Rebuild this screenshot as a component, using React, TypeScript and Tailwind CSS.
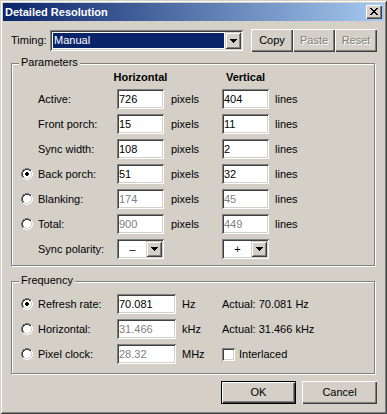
import React from "react";

const SUNKEN =
  "shadow-[inset_1px_1px_0_#808080,inset_-1px_-1px_0_#ffffff,inset_2px_2px_0_#404040,inset_-2px_-2px_0_#d4d0c8]";
const RAISED =
  "shadow-[inset_1px_1px_0_#ffffff,inset_-1px_-1px_0_#404040,inset_-2px_-2px_0_#808080]";
const RAISED_COMBO =
  "shadow-[inset_1px_1px_0_#d4d0c8,inset_-1px_-1px_0_#404040,inset_2px_2px_0_#ffffff,inset_-2px_-2px_0_#808080]";
const DEFAULT_BTN =
  "shadow-[inset_0_0_0_1px_#000000,inset_2px_2px_0_#ffffff,inset_-2px_-2px_0_#404040,inset_-3px_-3px_0_#808080]";

function Pixels({
  rows,
  colors,
}: {
  rows: string[];
  colors: Record<string, string>;
}) {
  const w = rows[0].length;
  const h = rows.length;
  const rects: React.ReactNode[] = [];
  rows.forEach((r, y) => {
    for (let x = 0; x < r.length; x++) {
      const c = colors[r[x]];
      if (c)
        rects.push(
          <rect key={`${x}-${y}`} x={x} y={y} width={1} height={1} fill={c} />
        );
    }
  });
  return (
    <svg
      width={w}
      height={h}
      viewBox={`0 0 ${w} ${h}`}
      shapeRendering="crispEdges"
      className="block"
    >
      {rects}
    </svg>
  );
}

const ARROW = ["XXXXXXX", ".XXXXX.", "..XXX..", "...X..."];
const CLOSE_X = [
  "XX....XX",
  ".XX..XX.",
  "..XXXX..",
  "...XX...",
  "..XXXX..",
  ".XX..XX.",
  "XX....XX",
];

const RADIO = [
  "....GGGG....",
  "..GGKKKKGG..",
  ".GKKwwwwKKW.",
  ".GKwwwwwwLW.",
  "GKwwwwwwwwLW",
  "GKwwwwwwwwLW",
  "GKwwwwwwwwLW",
  "GKwwwwwwwwLW",
  ".GKwwwwwwLW.",
  ".GLLwwwwLLW.",
  "..WWLLLLWW..",
  "....WWWW....",
];
const RADIO_ON = [
  "....GGGG....",
  "..GGKKKKGG..",
  ".GKKwwwwKKW.",
  ".GKwwwwwwLW.",
  "GKwwwXXwwwLW",
  "GKwwXXXXwwLW",
  "GKwwXXXXwwLW",
  "GKwwwXXwwwLW",
  ".GKwwwwwwLW.",
  ".GLLwwwwLLW.",
  "..WWLLLLWW..",
  "....WWWW....",
];
const RADIO_COLORS = {
  G: "#808080",
  K: "#404040",
  W: "#ffffff",
  L: "#d4d0c8",
  w: "#ffffff",
  X: "#000000",
};

function Radio({ checked }: { checked?: boolean }) {
  return <Pixels rows={checked ? RADIO_ON : RADIO} colors={RADIO_COLORS} />;
}

function Arrow() {
  return <Pixels rows={ARROW} colors={{ X: "#000000" }} />;
}

function Field({
  value,
  width,
  disabled,
}: {
  value: string;
  width: string;
  disabled?: boolean;
}) {
  return (
    <div
      className={`${width} h-[20px] bg-white ${SUNKEN} flex items-center pl-[2px] ${
        disabled ? "text-[#808080]" : "text-black"
      }`}
    >
      {value}
    </div>
  );
}

function Polarity({ sign }: { sign: string }) {
  return (
    <div className={`w-[47px] h-[20px] bg-white ${SUNKEN} p-[2px] flex`}>
      <div className="flex-1 flex items-center justify-center text-black">
        {sign}
      </div>
      <div
        className={`w-[16px] h-full bg-[#d4d0c8] ${RAISED_COMBO} flex items-center justify-center`}
      >
        <Arrow />
      </div>
    </div>
  );
}

function ParamRow({
  radio,
  checked,
  label,
  h,
  v,
  disabled,
}: {
  radio?: boolean;
  checked?: boolean;
  label: string;
  h: string;
  v: string;
  disabled?: boolean;
}) {
  return (
    <div className="flex items-center h-[20px]">
      <div className="w-[17px] flex items-center">
        {radio ? <Radio checked={checked} /> : null}
      </div>
      <div className="w-[79px]">{label}</div>
      <Field value={h} width="w-[47px]" disabled={disabled} />
      <div className="w-[51px] ml-[7px]">pixels</div>
      <Field value={v} width="w-[47px]" disabled={disabled} />
      <div className="ml-[6px]">lines</div>
    </div>
  );
}

function FreqRow({
  checked,
  label,
  value,
  unit,
  disabled,
  children,
}: {
  checked?: boolean;
  label: string;
  value: string;
  unit: string;
  disabled?: boolean;
  children?: React.ReactNode;
}) {
  return (
    <div className="flex items-center h-[20px]">
      <div className="w-[17px] flex items-center">
        <Radio checked={checked} />
      </div>
      <div className="w-[79px]">{label}</div>
      <Field value={value} width="w-[59px]" disabled={disabled} />
      <div className="w-[40px] ml-[6px]">{unit}</div>
      {children}
    </div>
  );
}

function Button({
  label,
  width,
  disabled,
  isDefault,
}: {
  label: string;
  width: string;
  disabled?: boolean;
  isDefault?: boolean;
}) {
  return (
    <div
      className={`${width} h-[23px] bg-[#d4d0c8] ${
        isDefault ? DEFAULT_BTN : RAISED
      } flex items-center justify-center ${
        disabled
          ? "text-[#808080] [text-shadow:1px_1px_0_#ffffff]"
          : "text-black"
      }`}
    >
      {label}
    </div>
  );
}

export default function App() {
  return (
    <div
      className={`w-[387px] h-[414px] bg-[#d4d0c8] p-[3px] flex flex-col font-['Liberation_Sans',Arial,sans-serif] text-[11px] leading-[13px] text-black shadow-[inset_1px_1px_0_#d4d0c8,inset_-1px_-1px_0_#404040,inset_2px_2px_0_#ffffff,inset_-2px_-2px_0_#808080] overflow-hidden select-none`}
    >
      {/* Title bar */}
      <div className="h-[18px] flex items-center justify-between pl-[2px] pr-[2px] bg-[linear-gradient(to_right,#0a246a,#a6caf0)]">
        <span className="text-white font-bold">Detailed Resolution</span>
        <div
          className={`w-[16px] h-[14px] bg-[#d4d0c8] ${RAISED} flex items-center justify-center pb-[1px]`}
        >
          <Pixels rows={CLOSE_X} colors={{ X: "#000000" }} />
        </div>
      </div>

      {/* Body */}
      <div className="flex flex-col pl-[8px] pr-[7px]">
        {/* Timing row */}
        <div className="mt-[8px] h-[23px] flex items-center">
          <div className="w-[39px]">Timing:</div>
          <div className={`w-[193px] h-[21px] bg-white ${SUNKEN} p-[2px] flex`}>
            <div className="flex-1 m-[1px] bg-[#0a246a] text-white flex items-center pl-[1px]">
              Manual
            </div>
            <div
              className={`w-[16px] h-full bg-[#d4d0c8] ${RAISED_COMBO} flex items-center justify-center`}
            >
              <Arrow />
            </div>
          </div>
          <div className="ml-[8px] flex">
            <Button label="Copy" width="w-[42px]" />
            <Button label="Paste" width="w-[42px]" disabled />
            <Button label="Reset" width="w-[42px]" disabled />
          </div>
        </div>

        {/* Parameters */}
        <div className="relative mt-[11px] mr-[2px] border border-[#808080] shadow-[1px_1px_0_#ffffff,inset_1px_1px_0_#ffffff] pt-[7px] pb-[6px] pl-[9px]">
          <span className="absolute left-[7px] top-[-8px] px-[2px] bg-[#d4d0c8]">
            Parameters
          </span>
          <div className="flex h-[13px] font-bold">
            <div className="w-[96px]" />
            <div className="w-[47px] flex justify-center whitespace-nowrap">
              Horizontal
            </div>
            <div className="w-[58px]" />
            <div className="w-[47px] flex justify-center whitespace-nowrap">
              Vertical
            </div>
          </div>
          <div className="mt-[5px] flex flex-col gap-[5px]">
            <ParamRow label="Active:" h="726" v="404" />
            <ParamRow label="Front porch:" h="15" v="11" />
            <ParamRow label="Sync width:" h="108" v="2" />
            <ParamRow radio checked label="Back porch:" h="51" v="32" />
            <ParamRow radio label="Blanking:" h="174" v="45" disabled />
            <ParamRow radio label="Total:" h="900" v="449" disabled />
            <div className="flex items-center h-[20px]">
              <div className="w-[17px]" />
              <div className="w-[79px]">Sync polarity:</div>
              <Polarity sign="–" />
              <div className="w-[51px] ml-[7px]" />
              <Polarity sign="+" />
            </div>
          </div>
        </div>

        {/* Frequency */}
        <div className="relative mt-[15px] mr-[2px] border border-[#808080] shadow-[1px_1px_0_#ffffff,inset_1px_1px_0_#ffffff] pt-[12px] pb-[9px] pl-[9px]">
          <span className="absolute left-[7px] top-[-8px] px-[2px] bg-[#d4d0c8]">
            Frequency
          </span>
          <div className="flex flex-col gap-[5px]">
            <FreqRow checked label="Refresh rate:" value="70.081" unit="Hz">
              <span>Actual: 70.081 Hz</span>
            </FreqRow>
            <FreqRow label="Horizontal:" value="31.466" unit="kHz" disabled>
              <span>Actual: 31.466 kHz</span>
            </FreqRow>
            <FreqRow label="Pixel clock:" value="28.32" unit="MHz" disabled>
              <div className="flex items-center">
                <div className={`w-[13px] h-[13px] bg-white ${SUNKEN}`} />
                <span className="ml-[4px]">Interlaced</span>
              </div>
            </FreqRow>
          </div>
        </div>

        {/* Buttons */}
        <div className="mt-[7px] flex justify-end gap-[6px]">
          <Button label="OK" width="w-[75px]" isDefault />
          <Button label="Cancel" width="w-[75px]" />
        </div>
      </div>
    </div>
  );
}
